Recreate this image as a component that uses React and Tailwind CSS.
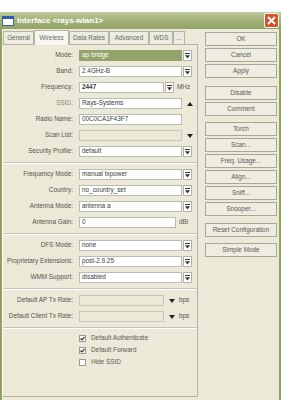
import React from "react";

function DropBtn() {
  return (
    <div className="w-[9px] h-[11px] ml-[1px] bg-white border border-[#b4b4a8] flex items-center justify-center shrink-0">
      <svg width="5" height="6" viewBox="0 0 5 6">
        <rect x="0" y="0" width="5" height="1" fill="#333" />
        <path d="M0 2.2 L5 2.2 L2.5 5.5 Z" fill="#333" />
      </svg>
    </div>
  );
}

function Arrow({ up }) {
  return (
    <div className="w-[15px] flex items-center justify-center shrink-0">
      <svg width="6" height="4" viewBox="0 0 6 4">
        {up ? <path d="M0 4 L6 4 L3 0 Z" fill="#222" /> : <path d="M0 0 L6 0 L3 4 Z" fill="#222" />}
      </svg>
    </div>
  );
}

function Row({ label, children, dim }) {
  return (
    <div className="flex items-center h-[11px]">
      <div className={"w-[71px] text-right pr-[1px] " + (dim ? "text-[#8a8a80]" : "text-[#55554e]")}>{label}</div>
      <div className="ml-[5px] flex items-center">{children}</div>
    </div>
  );
}

function Field({ w = 103, value, bold, selected, disabled }) {
  let cls = "bg-white border-[#b9bcb0] text-[#3a3a3a]";
  if (selected) cls = "bg-[#93a36a] border-[#93a36a] text-white";
  if (disabled) cls = "bg-[#ece9d8] border-[#c9c7ba] text-[#333]";
  return (
    <div
      className={"h-[11px] border px-[2px] flex items-center leading-none " + cls + (bold ? " font-bold" : "")}
      style={{ width: w }}
    >
      {value}
    </div>
  );
}

function Sep() {
  return <div className="my-[5px] border-t border-[#c7c4b3] border-b border-b-white" />;
}

function Check({ on, label }) {
  return (
    <div className="flex items-center h-[7px] pl-[76px]">
      <div className="w-[7px] h-[7px] bg-white border border-[#9a9a90] flex items-center justify-center">
        {on && (
          <svg width="5" height="5" viewBox="0 0 5 5">
            <path d="M0.5 2.5 L2 4 L4.5 0.8" stroke="#222" strokeWidth="1.1" fill="none" />
          </svg>
        )}
      </div>
      <span className="ml-[5px] text-[#5a5a54]">{label}</span>
    </div>
  );
}

function Btn({ children, className = "" }) {
  return (
    <div className={"h-[14px] border border-[#a8a697] bg-[#efede2] flex items-center justify-center text-[#5a5a54] " + className}>
      {children}
    </div>
  );
}

export default function App() {
  const tabs = [
    ["General", 31],
    ["Wireless", 35],
    ["Data Rates", 40],
    ["Advanced", 40],
    ["WDS", 24],
    ["...", 12],
  ];
  return (
    <div
      className="w-[281px] h-[400px] bg-white overflow-hidden flex flex-col text-[6.4px] leading-none"
      style={{ fontFamily: '"Liberation Sans", Arial, sans-serif' }}
    >
      <div className="h-[12px] shrink-0" />
      {/* title bar */}
      <div className="h-[17px] shrink-0 bg-gradient-to-b from-[#bfcb9d] via-[#a2b179] to-[#93a468] flex items-center px-[2px]">
        <div className="w-[12px] h-[10px] bg-white border border-[#3d5f9a] border-t-[3px] border-t-[#2f5cb8]" />
        <span className="ml-[3px] text-white font-bold text-[8px]">Interface &lt;rays-wlan1&gt;</span>
        <div className="ml-auto w-[15px] h-[15px] bg-[#d6532c] border border-white rounded-[2px] flex items-center justify-center">
          <svg width="9" height="9" viewBox="0 0 9 9">
            <path d="M1 1 L8 8 M8 1 L1 8" stroke="white" strokeWidth="1.8" />
          </svg>
        </div>
      </div>
      {/* body */}
      <div className="flex-1 bg-[#ece9d8] border-x-2 border-[#8fa25f] flex pb-[3px]">
        <div className="w-[196px] flex flex-col">
          {/* tabs */}
          <div className="h-[15px] flex items-end pl-[1px]">
            {tabs.map(([t, w]) => (
              <div
                key={t}
                className={
                  "border border-b-0 border-[#b5b3a5] flex items-center justify-center text-[#6a6a64] " +
                  (t === "Wireless" ? "h-[15px] bg-[#f7f6f0] -mb-px relative z-10" : "h-[13px] bg-[#ecebe0]")
                }
                style={{ width: w }}
              >
                {t}
              </div>
            ))}
          </div>
          {/* panel */}
          <div className="flex-1 border border-[#b5b3a5] border-l-white bg-[#ece9d8] pt-[5px]">
            <div className="flex flex-col gap-[5px]">
              <Row label="Mode:">
                <Field value="ap bridge" selected />
                <DropBtn />
              </Row>
              <Row label="Band:">
                <Field value="2.4GHz-B" />
                <DropBtn />
              </Row>
              <Row label="Frequency:">
                <Field w={85} value="2447" bold />
                <DropBtn />
                <span className="ml-[3px] text-[#555]">MHz</span>
              </Row>
              <Row label="SSID:" dim>
                <Field value="Rays-Systems" />
                <Arrow up />
              </Row>
              <Row label="Radio Name:">
                <Field value="00C0CA1F43F7" />
              </Row>
              <Row label="Scan List:">
                <Field disabled />
                <Arrow />
              </Row>
              <Row label="Security Profile:">
                <Field value="default" />
                <DropBtn />
              </Row>
            </div>
            <Sep />
            <div className="flex flex-col gap-[5px]">
              <Row label="Frequency Mode:">
                <Field value="manual txpower" />
                <DropBtn />
              </Row>
              <Row label="Country:">
                <Field value="no_country_set" />
                <DropBtn />
              </Row>
              <Row label="Antenna Mode:">
                <Field value="antenna a" />
                <DropBtn />
              </Row>
              <Row label="Antenna Gain:">
                <Field w={97} value="0" />
                <span className="ml-[3px] text-[#555]">dBi</span>
              </Row>
            </div>
            <Sep />
            <div className="flex flex-col gap-[5px]">
              <Row label="DFS Mode:">
                <Field value="none" />
                <DropBtn />
              </Row>
              <Row label="Proprietary Extensions:">
                <Field value="post-2.9.25" />
                <DropBtn />
              </Row>
              <Row label="WMM Support:">
                <Field value="disabled" />
                <DropBtn />
              </Row>
            </div>
            <Sep />
            <div className="flex flex-col gap-[5px]">
              <Row label="Default AP Tx Rate:">
                <Field w={85} disabled />
                <Arrow />
                <span className="text-[#555]">bps</span>
              </Row>
              <Row label="Default Client Tx Rate:">
                <Field w={85} disabled />
                <Arrow />
                <span className="text-[#555]">bps</span>
              </Row>
            </div>
            <Sep />
            <div className="flex flex-col gap-[5px] pt-[1px]">
              <Check on label="Default Authenticate" />
              <Check on label="Default Forward" />
              <Check label="Hide SSID" />
            </div>
          </div>
        </div>
        {/* buttons */}
        <div className="w-[72px] ml-[7px] pt-[3px] flex flex-col gap-[2px]">
          <Btn>OK</Btn>
          <Btn>Cancel</Btn>
          <Btn>Apply</Btn>
          <Btn className="mt-[6px]">Disable</Btn>
          <Btn>Comment</Btn>
          <Btn className="mt-[4px]">Torch</Btn>
          <Btn>Scan...</Btn>
          <Btn>Freq. Usage...</Btn>
          <Btn>Align...</Btn>
          <Btn>Sniff...</Btn>
          <Btn>Snooper...</Btn>
          <Btn className="mt-[5px]">Reset Configuration</Btn>
          <Btn className="mt-[4px]">Simple Mode</Btn>
        </div>
      </div>
    </div>
  );
}
